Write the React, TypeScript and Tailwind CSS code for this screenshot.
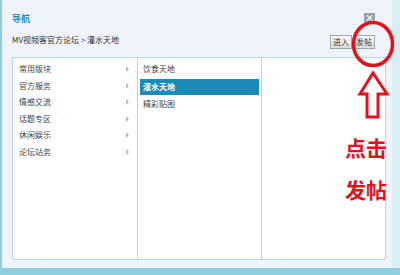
import React from "react";

const cjk = { fontFamily: '"Noto Sans CJK SC", "Noto Sans", sans-serif' };

const left = ["常用版块", "官方服务", "情感交流", "话题专区", "休闲娱乐", "论坛站务"];
const mid = ["饮食天地", "灌水天地", "精彩贴图"];

export default function App() {
  return (
    <div className="relative w-[400px] h-[275px] overflow-hidden bg-[#8ecde0]" style={cjk}>
      <div className="flex h-[268px]">
        <div className="ml-[2px] w-[390px] h-full bg-[#eef4f9] px-[10px] pt-[10px] flex flex-col">
          <div className="flex items-start justify-between h-[14px]">
            <span className="text-[9px] leading-[12px] font-bold text-[#2a90b8] mt-[3px]">导航</span>
            <span className="mt-[3px] mr-[7px] w-[11px] h-[9px] bg-[#9ba3a8] flex items-center justify-center text-white text-[9px] leading-none font-bold">×</span>
          </div>
          <div className="flex items-center justify-between h-[22px] mt-[8px]">
            <span className="text-[8px] text-[#333] -mt-[6px]">MV视频客官方论坛 &gt; 灌水天地</span>
            <div className="flex gap-[1px] mr-[7px] -mt-[3px]">
              <span className="w-[22px] h-[14px] border border-[#9aa] bg-gradient-to-b from-[#fbfbfb] to-[#dcdcdc] text-[8px] leading-[12px] text-[#333] text-center">进入</span>
              <span className="w-[22px] h-[14px] border border-[#9aa] bg-gradient-to-b from-[#fbfbfb] to-[#dcdcdc] text-[8px] leading-[12px] text-[#333] text-center">发帖</span>
            </div>
          </div>
          <div className="mt-[3px] w-[374px] h-[203px] grid grid-cols-[125px_124px_1fr] border border-[#b3d8e2] bg-white">
            <div className="border-r border-[#b3d8e2] pt-[3px] px-[6px]">
              {left.map((t) => (
                <div key={t} className="h-[16.5px] flex items-center justify-between text-[8px] text-[#444]">
                  <span>{t}</span>
                  <span className="w-0 h-0 border-y-[3px] border-y-transparent border-l-[3px] border-l-[#b8bcc0] mr-[2px]" />
                </div>
              ))}
            </div>
            <div className="border-r border-[#b3d8e2] pt-[3px] px-[2px]">
              {mid.map((t, i) => (
                <div
                  key={t}
                  className={
                    i === 1
                      ? "h-[16px] my-[1px] flex items-center px-[3px] text-[8px] font-bold text-white bg-[#1a8bb9]"
                      : "h-[16.5px] flex items-center px-[3px] text-[8px] text-[#444]"
                  }
                >
                  {t}
                </div>
              ))}
            </div>
            <div />
          </div>
        </div>
        <div className="flex-1 bg-[#d9edf3]" />
      </div>

      <svg className="absolute left-0 top-0" width="400" height="275">
        <ellipse cx="373" cy="44" rx="19.5" ry="21.5" fill="none" stroke="#e5101c" strokeWidth="3.5" />
        <path
          d="M373 73 L387 94 L378 94 L378 117 L367 117 L367 94 L360 94 Z"
          fill="none"
          stroke="#e5101c"
          strokeWidth="3"
          strokeLinejoin="miter"
        />
      </svg>
      <div className="absolute left-[345px] top-[134px] text-[21px] leading-[26px] font-bold text-[#e5101c]">点击</div>
      <div className="absolute left-[345px] top-[176px] text-[21px] leading-[26px] font-bold text-[#e5101c]">发帖</div>
    </div>
  );
}
